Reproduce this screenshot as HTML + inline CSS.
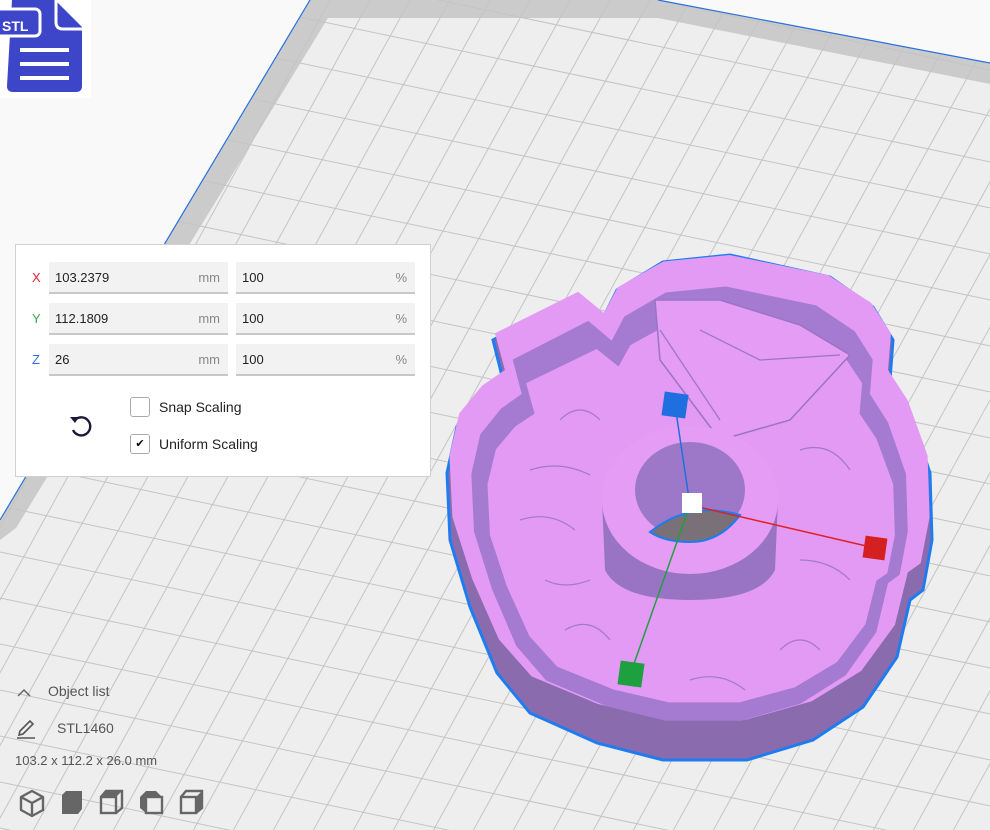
<!DOCTYPE html>
<html><head><style>
html,body{margin:0;width:990px;height:830px;overflow:hidden}
body{background:#f9f9f9;font-family:"Liberation Sans",sans-serif;position:relative}
svg.bg{position:absolute;left:0;top:0}
.panel{position:absolute;left:15px;top:244px;width:416px;height:233px;background:#fff;border:1px solid #d0d0d0;box-sizing:border-box}
.row{position:absolute;left:0;height:32px;width:415px}
.lab{position:absolute;left:16px;top:8px;font-size:13px}
.f{position:absolute;top:0;height:32px;background:#f2f2f2;border-bottom:2px solid #c8c8c8;box-sizing:border-box;font-size:13px;color:#222}
.f span{position:absolute;left:6px;top:8px}
.f i{position:absolute;right:8px;top:8px;font-style:normal;color:#888}
.cb{position:absolute;left:114px;width:20px;height:20px;border:1px solid #aaa;border-radius:3px;background:#fff;box-sizing:border-box;font-size:11px;text-align:center;line-height:18px}
.cl{position:absolute;left:143px;font-size:14px;color:#222}
.bl{position:absolute;font-size:13px;color:#555}
</style></head><body>
<svg class="bg" width="990" height="830" viewBox="0 0 990 830">
<defs><clipPath id="pl"><polygon points="310,0 658,0 990,63 990,830 0,830 0,520"/></clipPath>
<path id="outer" d="M493,340 L577,295 L603,318 L617,290 L663,262 L730,255 L830,277 L873,307 L893,340 L890,380 L910,413 L930,473 L932,540 L923,590 L910,600 L897,657 L863,707 L813,740 L747,760 L663,760 L597,743 L530,713 L497,673 L470,607 L450,540 L447,473 L457,427 L480,397 L503,380 Z"/>
</defs>
<polygon points="310,0 658,0 990,63 990,830 0,830 0,520" fill="#eeeeee"/>
<g clip-path="url(#pl)">
<polygon points="310,0 658,0 990,63 990,84 658,18 328,18 16,528 0,540 0,520" fill="#cbcbcb"/>
<g id="grid" stroke="#c4c4c4" stroke-width="1"></g>
</g>
<polyline points="0,520 310,0" stroke="#2a6fe0" stroke-width="1.2" fill="none"/>
<polyline points="658,0 990,63" stroke="#2a6fe0" stroke-width="1.2" fill="none"/>
<rect x="0" y="0" width="91" height="98" fill="#fff"/>
<path d="M12,0 H55 L82,27 V86 Q82,92 76,92 H13 Q7,92 7,86 Z" fill="#3d46c9"/>
<path d="M56,0 V22 Q56,29 63,29 H82" fill="none" stroke="#fff" stroke-width="3"/>
<rect x="-6" y="9" width="46" height="27" rx="5" fill="#3d46c9" stroke="#fff" stroke-width="3"/>
<text x="2" y="31" fill="#fff" font-size="14" font-weight="bold" font-family="Liberation Sans">STL</text>
<rect x="20" y="48" width="49" height="4" fill="#fff"/><rect x="20" y="62" width="49" height="4" fill="#fff"/><rect x="20" y="76" width="49" height="4" fill="#fff"/>
<!-- model -->
<use href="#outer" fill="#8a6cae" stroke="#1f7cf0" stroke-width="3"/>
<use href="#outer" transform="translate(690,255) scale(0.99,0.92) translate(-690,-255)" fill="#e39af5"/>
<use href="#outer" transform="translate(690,480) scale(0.9,0.86) translate(-690,-480)" fill="#a47bd0"/>
<use href="#outer" transform="translate(700,520) scale(0.84,0.76) translate(-700,-520)" fill="#e29af5"/>
<path d="M655,300 L720,300 L800,325 L850,355 L790,420 L720,440 L660,360 Z" fill="#e49cf5" stroke="#9a74c4" stroke-width="1.5"/>
<path d="M660,330 L720,420 M700,330 L760,360 L840,355" stroke="#9a74c4" stroke-width="1.2" fill="none"/>
<path d="M602,500 L605,570 Q620,600 690,600 Q760,600 775,570 L778,500 Z" fill="#9a74c4"/>
<ellipse cx="690" cy="500" rx="88" ry="74" fill="#e49cf5"/>
<ellipse cx="690" cy="490" rx="55" ry="48" fill="#9e78c8"/>
<path d="M650,532 Q690,500 740,515 Q720,542 690,542 Q665,542 650,532 Z" fill="#7a7078" stroke="#1f7cf0" stroke-width="2"/>
<g stroke="#a07ac8" stroke-width="1.2" fill="none">
<path d="M530,470 Q560,460 590,475 M520,520 Q550,510 575,530 M545,580 Q565,590 590,580 M565,630 Q590,615 610,640 M690,680 Q720,670 745,690 M780,650 Q800,630 820,650 M800,560 Q830,560 850,580 M800,450 Q830,440 850,470 M560,420 Q580,400 600,420"/>
</g>
<line x1="690" y1="505" x2="675" y2="405" stroke="#1f6fe0" stroke-width="1.5"/>
<line x1="690" y1="505" x2="875" y2="548" stroke="#e02020" stroke-width="1.5"/>
<line x1="690" y1="505" x2="630" y2="675" stroke="#20a040" stroke-width="1.5"/>
<rect x="663" y="393" width="24" height="24" fill="#1f6fe0" transform="rotate(8 675 405)"/>
<rect x="864" y="537" width="22" height="22" fill="#d42020" transform="rotate(8 875 548)"/>
<rect x="619" y="662" width="24" height="24" fill="#1fa040" transform="rotate(8 631 674)"/>
<rect x="682" y="493" width="20" height="20" fill="#fff"/>
<g fill="none" stroke="#666" stroke-width="2.4" stroke-linejoin="round">
<path d="M32,791 L43,797 V810 L32,816 L21,810 V797 Z M21,797 L32,803 L43,797 M32,803 V816"/>
</g>
<path d="M62,795 L66,791 H82 V809 L78,814 H62 Z" fill="#666"/>
<g fill="none" stroke="#666" stroke-width="2.4"><rect x="101" y="797" width="15" height="16"/><path d="M101,797 L106,791 H122 V808 L116,813"/></g>
<path d="M106,791 H122 L116,797 H101 Z" fill="#666"/>
<g fill="none" stroke="#666" stroke-width="2.4"><rect x="146" y="797" width="16" height="16"/></g><path d="M140,797 L146,791 V813 L140,808 Z M146,791 H156 L162,797 H146Z" fill="#666"/>
<g fill="none" stroke="#666" stroke-width="2.4"><rect x="181" y="797" width="15" height="16"/><path d="M181,797 L186,791 H202 V808 L196,813"/></g><path d="M196,797 L202,791 V808 L196,813 Z" fill="#666"/>
<path d="M18,696 L24,690 L30,696" fill="none" stroke="#666" stroke-width="1.5"/>
<path d="M20,731 L30,721 L33,724 L23,734 L19,735 Z M17,738 H35" fill="none" stroke="#555" stroke-width="1.6"/>
</svg>
<div class="bl" style="left:48px;top:683px;font-size:14px">Object list</div>
<div class="bl" style="left:57px;top:720px;font-size:14px">STL1460</div>
<div class="bl" style="left:15px;top:753px">103.2 x 112.2 x 26.0 mm</div>
<div class="panel">
<div class="row" style="top:17px"><div class="lab" style="color:#e0253a">X</div><div class="f" style="left:33px;width:179px"><span>103.2379</span><i>mm</i></div><div class="f" style="left:220px;width:179px"><span>100</span><i>%</i></div></div>
<div class="row" style="top:58px"><div class="lab" style="color:#3aa84a">Y</div><div class="f" style="left:33px;width:179px"><span>112.1809</span><i>mm</i></div><div class="f" style="left:220px;width:179px"><span>100</span><i>%</i></div></div>
<div class="row" style="top:99px"><div class="lab" style="color:#2a6fe0">Z</div><div class="f" style="left:33px;width:179px"><span>26</span><i>mm</i></div><div class="f" style="left:220px;width:179px"><span>100</span><i>%</i></div></div>
<div class="cb" style="top:152px"></div><div class="cl" style="top:154px">Snap Scaling</div>
<div class="cb" style="top:189px">✔</div><div class="cl" style="top:191px">Uniform Scaling</div>
<svg style="position:absolute;left:52px;top:168px" width="26" height="26" viewBox="0 0 26 26"><path d="M6,8 A9,9 0 1 1 5,17" fill="none" stroke="#1a1a3a" stroke-width="2.4"/><path d="M2,4 L7,10 L11,4 Z" fill="#1a1a3a"/></svg>
</div>
<script>
var g=document.getElementById('grid'),s='';
for(var i=-40;i<60;i++){var x=330+i*40;s+='<line x1="'+x+'" y1="0" x2="'+(x-0.55*900)+'" y2="900"/>';}
for(var j=-30;j<40;j++){var y=j*46;s+='<line x1="0" y1="'+y+'" x2="990" y2="'+(y+0.21*990)+'"/>';}
g.innerHTML=s;
</script>
</body></html>
